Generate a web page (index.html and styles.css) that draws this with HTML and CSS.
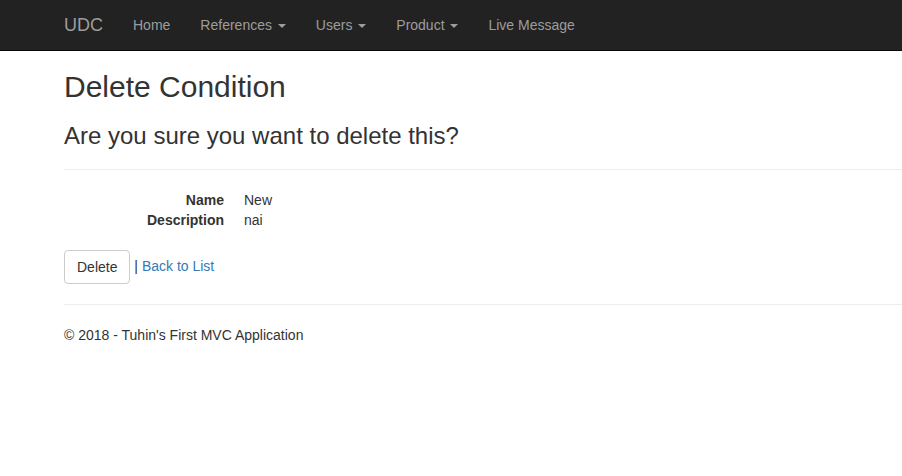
FILE: index.html
```html
<!DOCTYPE html>
<html>
<head>
<meta charset="utf-8">
<title>Delete - UDC</title>
<link rel="stylesheet" href="styles.css">
</head>
<body>
<div class="navbar">
  <div class="container nav-container">
    <a class="brand" href="#">UDC</a>
    <ul class="nav">
      <li><a href="#">Home</a></li>
      <li><a href="#">References <span class="caret"></span></a></li>
      <li><a href="#">Users <span class="caret"></span></a></li>
      <li><a href="#">Product <span class="caret"></span></a></li>
      <li><a href="#">Live Message</a></li>
    </ul>
  </div>
</div>
<div class="container body-content">
  <h2>Delete Condition</h2>
  <h3>Are you sure you want to delete this?</h3>
  <div>
    <hr>
    <dl class="dl-horizontal">
      <dt>Name</dt>
      <dd>New</dd>
      <dt>Description</dt>
      <dd>nai</dd>
    </dl>
    <form class="actions">
      <button type="button" class="btn">Delete</button> | <a href="#">Back to List</a>
    </form>
  </div>
  <hr>
  <footer>
    <p>&copy; 2018 - Tuhin's First MVC Application</p>
  </footer>
</div>
</body>
</html>
```
FILE: styles.css
```css
* { box-sizing: border-box; }
html, body { margin: 0; overflow-x: hidden; }
body {
  font-family: "Liberation Sans", Arial, sans-serif;
  font-size: 14px;
  line-height: 1.42857143;
  color: #333;
  background: #fff;
  padding-top: 50px;
}
a { color: #337ab7; text-decoration: none; }
.container {
  margin-left: 49px;
  padding-left: 15px;
  padding-right: 0;
}
.navbar {
  position: fixed;
  top: 0; left: 0; right: 0;
  height: 51px;
  background: #222;
  border-bottom: 1px solid #080808;
}
.nav-container { display: flex; height: 50px; }
.brand {
  margin-left: -15px;
  padding: 15px;
  font-size: 18px;
  line-height: 20px;
  height: 50px;
  color: #9d9d9d;
}
.nav { display: flex; list-style: none; margin: 0; padding: 0; }
.nav a {
  display: block;
  padding: 15px;
  line-height: 20px;
  color: #9d9d9d;
}
.caret {
  display: inline-block;
  width: 0; height: 0;
  margin-left: 2px;
  vertical-align: middle;
  border-top: 4px solid;
  border-right: 4px solid transparent;
  border-left: 4px solid transparent;
}
h2, h3 { font-weight: 500; line-height: 1.1; margin: 20px 0 10px; }
h2 { font-size: 30px; }
h3 { font-size: 24px; }
hr { margin: 20px 0; border: 0; border-top: 1px solid #eee; height: 0; }
.dl-horizontal { margin: 0 0 20px; }
.dl-horizontal dt {
  float: left; width: 160px; clear: left;
  text-align: right; font-weight: 700; line-height: 1.42857143;
  overflow: hidden; white-space: nowrap;
}
.dl-horizontal dd { margin-left: 180px; line-height: 1.42857143; }
.dl-horizontal::after { content: ""; display: table; clear: both; }
.actions { margin: 0; }
.btn {
  display: inline-block;
  padding: 6px 12px;
  font-family: inherit;
  font-size: 14px;
  line-height: 1.42857143;
  color: #333;
  background: #fff;
  border: 1px solid #ccc;
  border-radius: 4px;
  vertical-align: middle;
  cursor: pointer;
}
footer p { margin: 0 0 10px; }
```
